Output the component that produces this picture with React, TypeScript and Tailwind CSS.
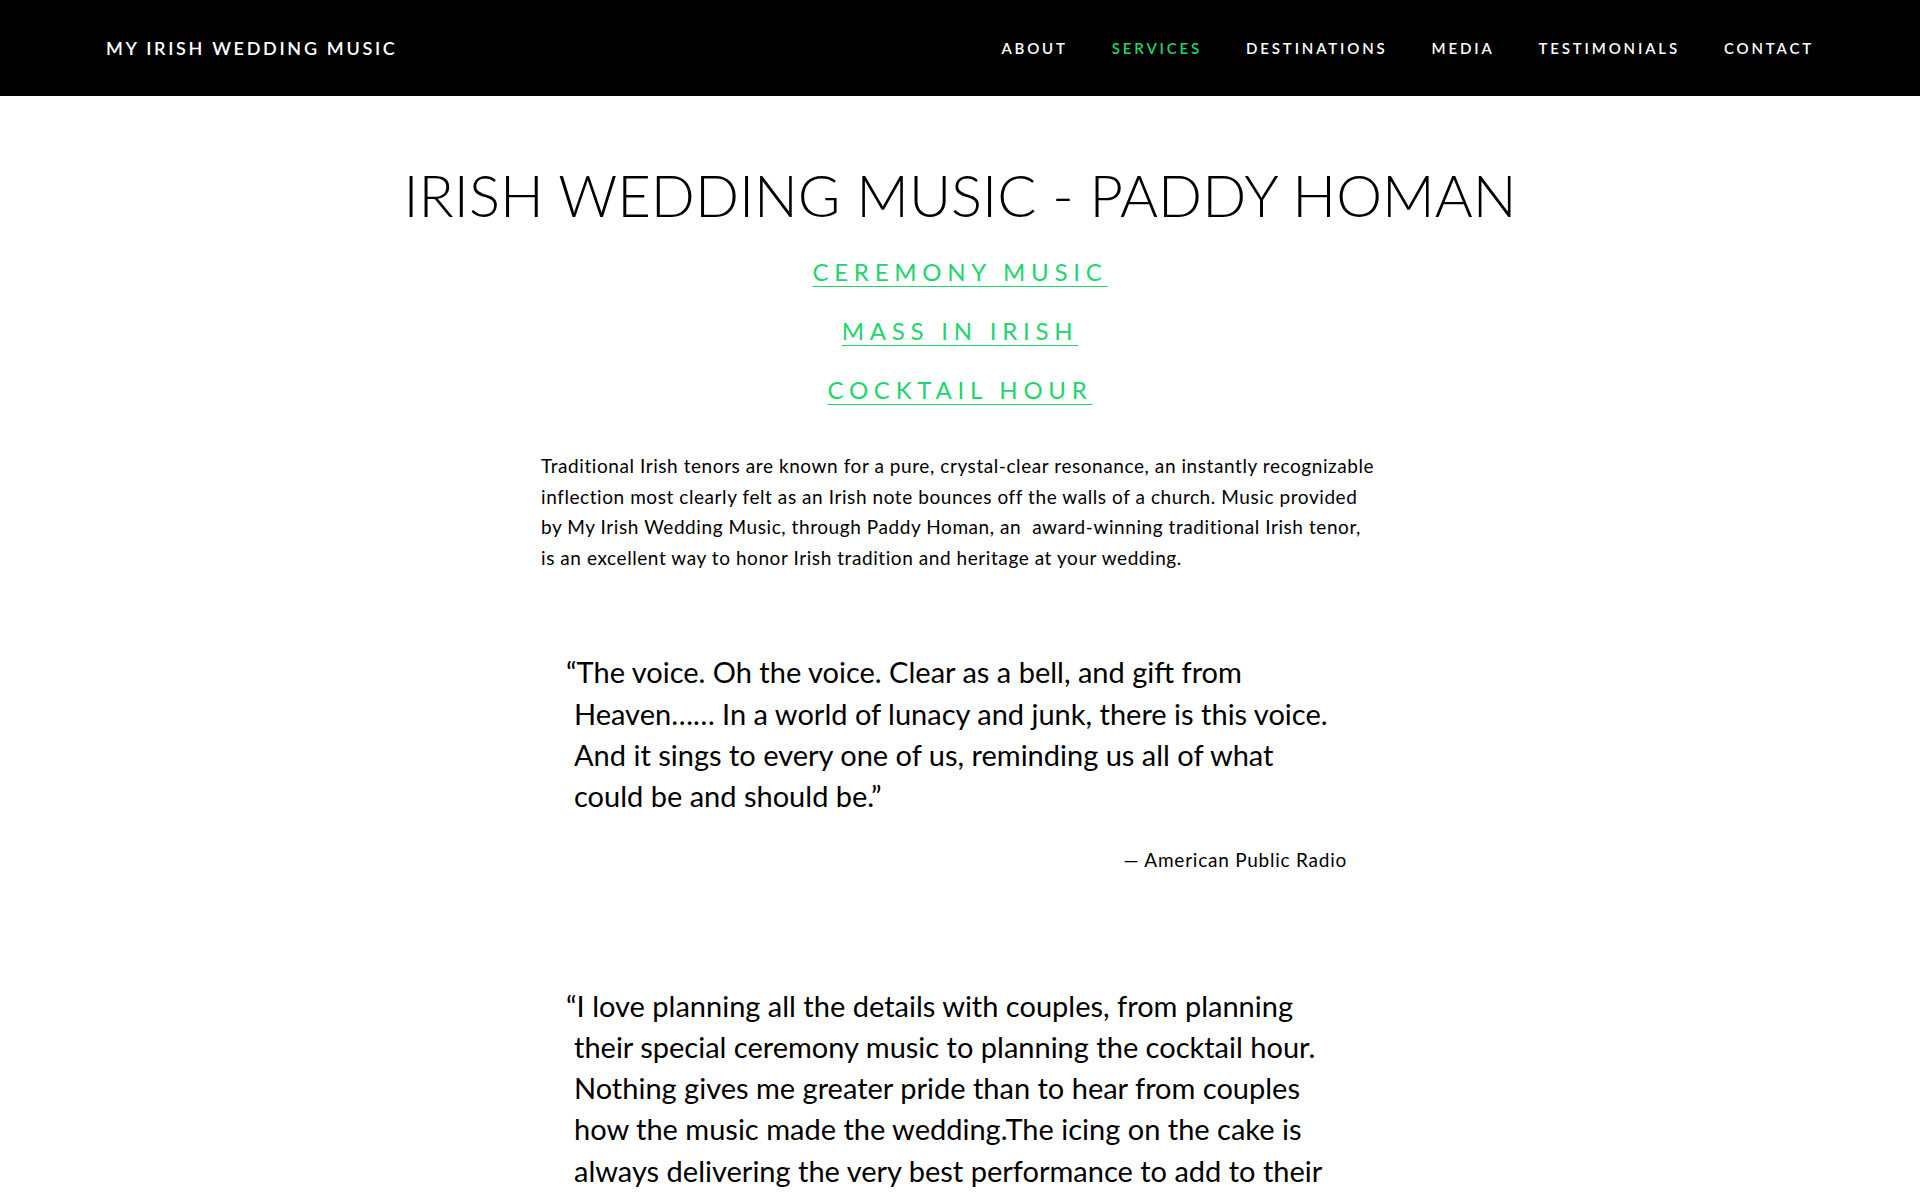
const nav = ["ABOUT", "SERVICES", "DESTINATIONS", "MEDIA", "TESTIMONIALS", "CONTACT"]

const links = ["CEREMONY MUSIC", "MASS IN IRISH", "COCKTAIL HOUR"]

function Quote({ lines }: { lines: string }) {
  return (
    <blockquote className="pl-[33px] pr-[32px] text-[29px] leading-[41.3px] text-black -indent-[8px]">
      {lines}
    </blockquote>
  )
}

export default function App() {
  return (
    <div className="min-h-[1200px] bg-white font-['Lato',sans-serif] text-black">
      {/* Header */}
      <header className="flex h-[96px] items-center justify-between bg-black px-[106px]">
        <a className="text-[18px] font-semibold tracking-[0.15em] text-white">MY IRISH WEDDING MUSIC</a>
        <nav className="flex items-center gap-[44px]">
          {nav.map((item) => (
            <a
              key={item}
              className={
                item === "SERVICES"
                  ? "text-[15px] font-semibold tracking-[0.19em] text-[#22d46f]"
                  : "text-[15px] font-semibold tracking-[0.19em] text-white"
              }
            >
              {item}
            </a>
          ))}
        </nav>
      </header>

      <main className="mx-auto w-[838px] pt-[60px]">
        <h1 className="-mx-[200px] whitespace-nowrap text-center text-[58px] font-light leading-[77px]">
          IRISH WEDDING MUSIC - PADDY HOMAN
        </h1>

        <div className="mt-[9px] flex flex-col items-center">
          {links.map((l) => (
            <a
              key={l}
              className="text-[24px] leading-[59px] tracking-[0.24em] text-[#22d46f] underline decoration-1 underline-offset-[5px]"
            >
              {l}
            </a>
          ))}
        </div>

        <p className="mt-[32px] text-[19px] leading-[30.6px] tracking-[0.03em]">
          Traditional Irish tenors are known for a pure, crystal-clear resonance, an instantly recognizable
          inflection most clearly felt as an Irish note bounces off the walls of a church. Music provided by My
          Irish Wedding Music, through Paddy Homan, an&nbsp; award-winning traditional Irish tenor, is an
          excellent way to honor Irish tradition and heritage at your wedding.
        </p>

        <figure className="mt-[78px]">
          <Quote lines="“The voice. Oh the voice. Clear as a bell, and gift from Heaven…… In a world of lunacy and junk, there is this voice. And it sings to every one of us, reminding us all of what could be and should be.”" />
          <figcaption className="mt-[29px] pr-[32px] text-right text-[19px] leading-[27px] tracking-[0.04em]">
            — American Public Radio
          </figcaption>
        </figure>

        <figure className="mt-[112px] pb-[80px]">
          <Quote lines="“I love planning all the details with couples, from planning their special ceremony music to planning the cocktail hour. Nothing gives me greater pride than to hear from couples how the music made the wedding.The icing on the cake is always delivering the very best performance to add to their special day.”" />
        </figure>
      </main>
    </div>
  )
}
